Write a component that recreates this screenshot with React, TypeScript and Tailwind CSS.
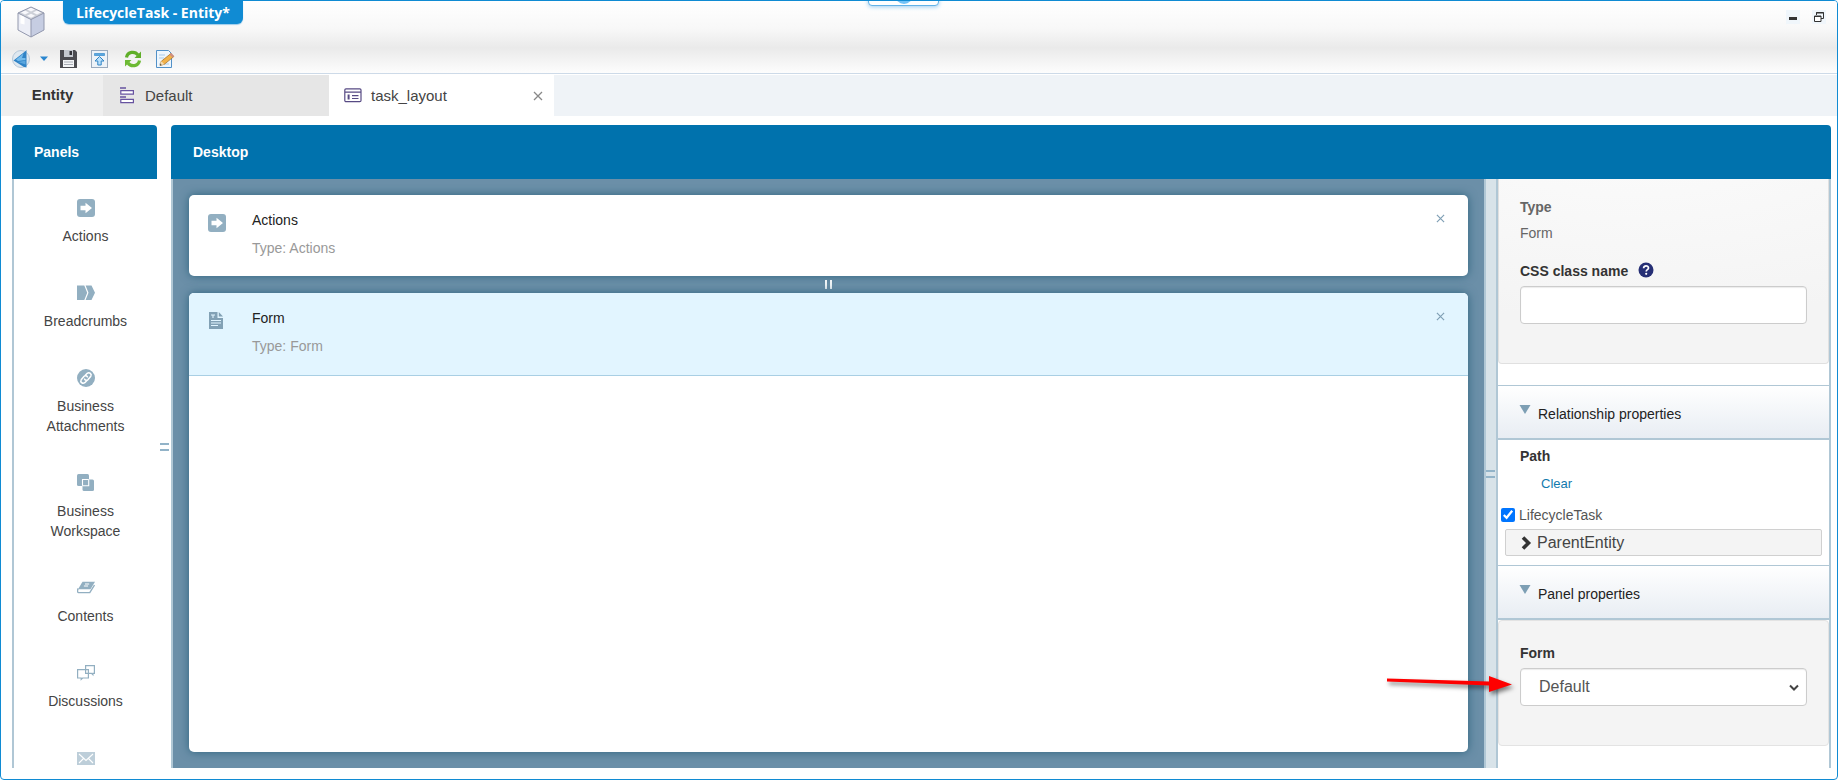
import React from "react";
import type { ReactNode } from "react";

const ActionsIcon = () => (
  <svg width="18" height="18" viewBox="0 0 18 18">
    <rect width="18" height="18" rx="3" fill="#92afc1" />
    <path d="M3.5 6.800h5V3.800L15 9l-6.500 5.200v-3h-5z" fill="#fff" />
  </svg>
);

const BreadcrumbsIcon = () => (
  <svg width="18" height="18" viewBox="0 0 18 18">
    <path d="M0 1.500h7.300l2.900 7.200-2.900 7.300H0z M8.600 1.500h5.900L18 8.700 14.500 16H8.600l2.900-7.300z" fill="#92afc1" />
  </svg>
);

const AttachmentIcon = () => (
  <svg width="18" height="18" viewBox="0 0 18 18">
    <circle cx="9" cy="9" r="9" fill="#92afc1" />
    <g fill="none" stroke="#fff" strokeWidth="1.500" strokeLinecap="round">
      <path d="M8.300 6.200l1.900-1.900c2.300-1.700 4.900.8 3.600 2.900l-2.900 3.500c-1.200 1.100-2.700.7-3.300-.6" />
      <path d="M9.700 11.800l-1.900 1.900c-2.300 1.700-4.900-.8-3.600-2.900l2.900-3.500c1.200-1.100 2.700-.7 3.300.6" />
    </g>
  </svg>
);

const WorkspaceIcon = () => (
  <svg width="18" height="18" viewBox="0 0 18 18">
    <rect x="0" y="0" width="12" height="12" rx="1.500" fill="#92afc1" />
    <rect x="5.500" y="5.500" width="11.500" height="11.500" rx="1.500" fill="#92afc1" />
    <path d="M5.500 11.700V5.500h6.200M5.500 11.700h6.200V5.500" fill="none" stroke="#fff" strokeWidth="1.100" />
  </svg>
);

const ContentsIcon = () => (
  <svg width="18" height="18" viewBox="0 0 18 18">
    <path d="M5.500 2.800H18l-4.500 7.400H1z" fill="#92afc1" />
    <path d="M8 5h4.200M6.900 7h4.200" stroke="#fff" strokeWidth="1" />
    <path d="M1.200 9.500C.2 11 .4 13.600 1.500 13.600h11.300L17.500 6" fill="none" stroke="#92afc1" strokeWidth="1.400" />
  </svg>
);

const DiscussionsIcon = () => (
  <svg width="18" height="18" viewBox="0 0 18 18" fill="none" stroke="#92afc1" strokeWidth="1.200">
    <path d="M8.600 1.600h8.800v7.800h-1.500v1.400l-1.400-1.400H8.600z" />
    <path d="M.6 5.600h10.800v8.400H5.600l-1.400 1.400V14H.6z" />
  </svg>
);

const MailIcon = () => (
  <svg width="18" height="18" viewBox="0 0 18 18">
    <rect y="3" width="18" height="13" fill="#92afc1" />
    <path d="M2 5l7 6.500L16 5M2 14l4.500-4.500M16 14l-4.500-4.500" fill="none" stroke="#fff" strokeWidth="1.100" />
  </svg>
);

const FormIcon = () => (
  <svg width="18" height="18" viewBox="0 0 18 18">
    <path d="M1 0h8.500v6H15v11H1z M10.800 0L15 4.600h-4.200z" fill="#82a1b5" />
    <path d="M3 3h4M5 3v3M3 8.500h10M3 11h10M3 13.500h7" stroke="#e2f5ff" strokeWidth="1.100" />
  </svg>
);

const CubeIcon = () => (
  <svg width="28" height="32" viewBox="0 0 28 32">
    <path d="M14 1l13 6v17l-13 7L1 24V7z" fill="#dfe3f0" />
    <path d="M1 7l13 6.500V31L1 24z" fill="#eceef6" />
    <path d="M27 7l-13 6.500V31l13-7z" fill="#c6cde2" />
    <path d="M14 1l13 6-13 6.500L1 7z" fill="#cdd0d8" />
    <path d="M14 1.500l4 2-4 2-4-2zM8 4.500l4 2-4 2-4-2zM20 4.500l4 2-4 2-4-2zM14 7.800l4 2-4 2-4-2z" fill="#f8f8fc" />
    <path d="M3.500 8.500v9l4 1v-8.200z" fill="#fff" />
    <path d="M1 7l13 6.500L27 7M14 13.500V31M14 1l13 6v17l-13 7L1 24V7z" fill="none" stroke="#9298ad" strokeLinejoin="round" />
  </svg>
);

const BackIcon = () => (
  <svg width="18" height="20" viewBox="0 0 18 20">
    <circle cx="9" cy="10" r="8.500" fill="#dfe8f0" stroke="#b5c7d8" />
    <path d="M1.500 11.500L13 2.500 14.500 1v17.500L12 18z" fill="#2f83c6" />
    <path d="M4 10.500L11.500 4.500 10 9h3.500v2L6 12z" fill="#74bbec" />
    <path d="M6 13l7.500-1.500v4z" fill="#5aa6de" />
  </svg>
);

const SaveIcon = () => (
  <svg width="17" height="18" viewBox="0 0 17 18">
    <path d="M0 0h15l2 2v16H0z" fill="#4b4b50" />
    <path d="M4 0h9v7H4z" fill="#c4c8cf" />
    <path d="M9.500 1H12v4H9.500z" fill="#33343a" />
    <path d="M3 10h11v7H3z" fill="#f3f4f6" />
    <path d="M4 12h9M4 14.500h9" stroke="#a7abb3" />
  </svg>
);

const PublishIcon = () => (
  <svg width="17" height="18" viewBox="0 0 17 18">
    <rect x=".5" y=".5" width="16" height="17" fill="#edf2f7" stroke="#9aaabd" />
    <path d="M3.500 3.500h10v2h-10z" fill="#5aa7e0" stroke="#3b8ccb" strokeWidth=".7" />
    <path d="M8.500 6.500l4.500 4.500h-2.800v4H6.800v-4H4z" fill="#b9e0fb" stroke="#3285c5" />
  </svg>
);

const RefreshIcon = () => (
  <svg width="18" height="18" viewBox="0 0 18 18">
    <path d="M2.500 7.500C3.500 1.500 11 .8 14 5" fill="none" stroke="#5fae28" strokeWidth="3.200" />
    <path d="M17 1.500v6.500h-6.500z" fill="#5fae28" />
    <path d="M15.500 10.500C14.500 16.500 7 17.200 4 13" fill="none" stroke="#6dba34" strokeWidth="3.200" />
    <path d="M1 16.500V10h6.500z" fill="#6dba34" />
  </svg>
);

const EditIcon = () => (
  <svg width="19" height="18" viewBox="0 0 19 18">
    <path d="M.5.500h12l3 3v14H.500z" fill="#eef6fd" stroke="#5291c8" />
    <path d="M3 5h6M3 8h5M3 14h10" stroke="#a9cbea" />
    <path d="M4 15.500l1.300-4.200 9.500-7.700 3 3-9.500 7.700z" fill="#f2b249" stroke="#a9762f" strokeWidth=".8" />
    <path d="M13.500 4.400l3 3 1.600-1.500-3-3z" fill="#cf8d80" />
    <path d="M4 15.500l1.300-4.200 3 3z" fill="#f3dcb5" />
    <path d="M4 15.500l.5-1.700 1.200 1.200z" fill="#333" />
  </svg>
);

const LayoutRowsIcon = () => (
  <svg width="16" height="17" viewBox="0 0 16 17" fill="none" stroke="#6753a0">
    <path d="M1 1h6M1 10h6" strokeWidth="1.500" />
    <path d="M1.800 3.600h12.600v3.600H1.800zM1.800 12.300h12.600v3.400H1.800z" fill="#fff" strokeWidth="1.200" />
  </svg>
);

const LayoutIcon = () => (
  <svg width="18" height="16" viewBox="0 0 18 16" fill="none" stroke="#574a84" strokeWidth="1.200">
    <rect x=".8" y="1.800" width="16.200" height="12.800" rx="1.200" />
    <path d="M1 5.200h16M8 8.600h6.500M8 11.500h6.500" />
    <path d="M4.600 7.500v5" strokeWidth="2" />
  </svg>
);

const CloseIcon = ({ size }: { size: number }) => (
  <svg width={size} height={size} viewBox="0 0 10 10" stroke="currentColor" strokeWidth="1.300">
    <path d="M1 1l8 8M9 1L1 9" />
  </svg>
);

const palette: { name: string; icon: ReactNode }[] = [
  { name: "Actions", icon: <ActionsIcon /> },
  { name: "Breadcrumbs", icon: <BreadcrumbsIcon /> },
  { name: "Business Attachments", icon: <AttachmentIcon /> },
  { name: "Business Workspace", icon: <WorkspaceIcon /> },
  { name: "Contents", icon: <ContentsIcon /> },
  { name: "Discussions", icon: <DiscussionsIcon /> },
];

function TitleBar() {
  return (
    <header className="relative flex h-[73px] shrink-0 flex-col justify-between border-b border-[#cddae8] bg-[linear-gradient(#ffffff_0%,#f8f8f8_38%,#eaeaea_65%,#fdfdfd_100%)]">
      <div className="flex items-start justify-between">
        <div className="flex items-start gap-[18px] pl-4">
          <div className="pt-[5px]"><CubeIcon /></div>
          <h1 className="flex h-[23px] w-[180px] items-center justify-center rounded-b-[6px] bg-[#108bd3] font-['Open_Sans',sans-serif] text-sm font-bold text-white shadow-[0_1px_1px_#9ccbeb]">
            LifecycleTask - Entity*
          </h1>
        </div>
        <div className="flex gap-3 pr-[11px] pt-[9px]">
          <button aria-label="Minimize" className="flex size-[14px] items-center justify-center bg-[#f0f6fb]">
            <svg width="10" height="10" viewBox="0 0 10 10"><path d="M1 5h8v3H1z" fill="#333" /></svg>
          </button>
          <button aria-label="Restore" className="flex size-[14px] items-center justify-center bg-[#f0f6fb]">
            <svg width="12" height="12" viewBox="0 0 12 12" fill="none" stroke="#333">
              <path d="M3.500 4V1.500h7v6H8M3 2h8" />
              <path d="M1.500 5h6.500v5.500H1.500zM1 5.500h7" fill="#fff" />
            </svg>
          </button>
        </div>
      </div>
      <nav className="mb-[5px] flex h-[18px] items-center pl-[11px]" aria-label="Toolbar">
        <button aria-label="Back"><BackIcon /></button>
        <button aria-label="Back history" className="ml-2.5">
          <svg width="8" height="6" viewBox="0 0 8 6"><path d="M0 .5h8L4 5z" fill="#2a86cf" /></svg>
        </button>
        <button aria-label="Save" className="ml-3"><SaveIcon /></button>
        <button aria-label="Publish" className="ml-3.5"><PublishIcon /></button>
        <button aria-label="Refresh" className="ml-4"><RefreshIcon /></button>
        <button aria-label="Edit" className="ml-3.5"><EditIcon /></button>
      </nav>
      <div className="absolute left-1/2 -top-1 flex h-[9px] w-[71px] -translate-x-[51px] items-end justify-center overflow-hidden rounded-b-[4px] border border-[#63b3e8] bg-white shadow-[0_1px_4px_#9bcdf0]">
        <svg width="20" height="6" viewBox="0 0 20 6"><circle cx="10" cy="-4" r="9" fill="#72c2f7" /></svg>
      </div>
    </header>
  );
}

function TabBar() {
  return (
    <nav className="mt-px flex h-[41px] shrink-0 bg-[#eff3f7] pl-px text-[15px] text-[#444]" aria-label="Editors">
      <button className="w-[101px] bg-[#efefef] pb-0.5 text-[15px] font-bold text-[#333]">Entity</button>
      <button className="flex w-[226px] items-center gap-2.5 bg-[#e6e6e6] pl-4">
        <LayoutRowsIcon />Default
      </button>
      <div className="flex w-[225px] items-center justify-between bg-white pl-[15px] pr-[11px]">
        <button className="flex items-center gap-[9px]"><LayoutIcon />task_layout</button>
        <button aria-label="Close task_layout" className="text-[#888]"><CloseIcon size={10} /></button>
      </div>
    </nav>
  );
}

function PanelHeading({ name, icon }: { name: string; icon: ReactNode }) {
  return (
    <div className="flex items-start pb-[18px]">
      <div className="w-[63px] shrink-0 pl-[19px] pt-[19px]">{icon}</div>
      <div className="flex-1 pt-[15px]">
        <h3 className="leading-5 text-[#222]">{name}</h3>
        <p className="mt-2 leading-5 text-[#999]">Type: {name}</p>
      </div>
      <button aria-label={`Remove ${name}`} className="px-[23px] pt-[19px] text-[#7f9fb5]"><CloseIcon size={9} /></button>
    </div>
  );
}

function SectionHeader({ title }: { title: string }) {
  return (
    <button className="flex h-[55px] w-full shrink-0 items-start gap-[7px] border-b-2 border-t border-[#b0c7d5] bg-linear-to-b from-white to-[#e8edf3] pl-[21px] pt-[18px] text-[#222]">
      <svg width="12" height="16" viewBox="0 0 12 16"><path d="M.5 1h11L6 10z" fill="#7d9fb4" /></svg>
      {title}
    </button>
  );
}

function Properties() {
  return (
    <aside className="flex w-[335px] shrink-0 flex-col border-x-2 border-[#b0c7d5] bg-white">
      <section className="flex h-[185px] shrink-0 flex-col rounded-b-[4px] border border-t-0 border-[#e0e0e0] bg-[radial-gradient(ellipse_500px_200px_at_40%_-60px,#fcfcfc_0%,#f4f4f4_100%)] px-[21px] pt-[18px]">
        <h3 className="font-bold leading-5 text-[#666]">Type</h3>
        <p className="mt-1.5 leading-5 text-[#666]">Form</p>
        <div className="mt-[18px] flex items-center gap-2.5 leading-5">
          <label htmlFor="css-class" className="font-bold text-[#333]">CSS class name</label>
          <svg width="16" height="18" viewBox="0 0 16 18">
            <circle cx="8" cy="8" r="7.500" fill="#262f75" />
            <path d="M5.600 6.200c0-3.200 4.900-3 4.900-.2 0 1.700-2.300 1.700-2.300 3.500" fill="none" stroke="#fff" strokeWidth="1.700" />
            <circle cx="8.200" cy="11.800" r="1.100" fill="#fff" />
          </svg>
        </div>
        <input id="css-class" type="text" className="mt-[5px] h-[38px] w-full shrink-0 rounded-[4px] border border-[#ccc] bg-white px-4 text-base shadow-[inset_0_1px_1px_rgba(0,0,0,0.08)]" />
      </section>
      <div className="mt-[21px]"><SectionHeader title="Relationship properties" /></div>
      <section className="flex h-[125px] shrink-0 flex-col">
        <h3 className="mt-1.5 pl-[22px] font-bold leading-5 text-[#333]">Path</h3>
        <a href="#clear" className="mt-2 self-start pl-[43px] text-[13px] leading-5 text-[#127aad]">Clear</a>
        <div className="mt-[11px] flex items-center gap-1 pl-[3px] leading-5">
          <input id="lifecycle-task" type="checkbox" defaultChecked className="size-[14px] accent-[#0075ff]" />
          <label htmlFor="lifecycle-task" className="text-[#555]">LifecycleTask</label>
        </div>
        <button className="mx-[7px] mt-1 flex h-[27px] shrink-0 items-center gap-[5px] rounded-[2px] border border-[#d0d0d0] bg-[#f4f4f4] pl-[15px] text-base text-[#444]">
          <svg width="11" height="14" viewBox="0 0 11 14"><path d="M2 1.500L7.500 7 2 12.500" fill="none" stroke="#333" strokeWidth="3.600" /></svg>
          ParentEntity
        </button>
      </section>
      <SectionHeader title="Panel properties" />
      <section className="flex h-[126px] shrink-0 flex-col rounded-[4px] border border-[#e3e3e3] bg-[#f4f4f4] px-[21px] pt-[22px]">
        <label htmlFor="form-choice" className="font-bold leading-5 text-[#333]">Form</label>
        <div className="relative mt-[5px]">
          <select id="form-choice" className="h-[38px] w-full appearance-none rounded-[4px] border border-[#ccc] bg-white pl-[18px] text-base text-[#555] shadow-[inset_0_1px_1px_rgba(0,0,0,0.08)]">
            <option>Default</option>
          </select>
          <svg className="pointer-events-none absolute right-2 top-4" width="10" height="8" viewBox="0 0 10 8"><path d="M1 1.500l4 4 4-4" fill="none" stroke="#444" strokeWidth="2" /></svg>
          <svg className="pointer-events-none absolute -left-[134px] top-0 overflow-visible" width="132" height="30" viewBox="0 0 132 30">
            <g className="drop-shadow-[2px_3px_2px_rgba(0,0,0,0.5)]" fill="#fe0000">
              <path d="M1 10.500l102 3V8l23 8.500-23 7.500v-6.500L1 13.500z" />
            </g>
          </svg>
        </div>
      </section>
    </aside>
  );
}

export default function App() {
  return (
    <div className="flex h-screen min-h-[480px] flex-col overflow-hidden rounded-[4px] border border-[#108bd3] bg-white font-['Liberation_Sans',Arial,sans-serif] text-sm text-[#444]">
      <TitleBar />
      <TabBar />
      <main className="flex min-h-0 flex-1 pb-[11px] pl-[11px] pr-1.5 pt-[9px]">
        <section className="flex w-[145px] shrink-0 flex-col">
          <h2 className="flex h-[54px] shrink-0 items-center rounded-t-[4px] bg-[#0072ad] pl-[22px] font-bold text-white">Panels</h2>
          <ul className="min-h-0 flex-1 overflow-hidden border-l-2 border-[#b0c7d5]">
            {palette.map((item) => (
              <li key={item.name} className="flex flex-col items-center gap-[9px] px-4 pb-[18px] pt-5 text-center leading-5">
                {item.icon}
                <span>{item.name}</span>
              </li>
            ))}
            <li className="flex justify-center pt-5 opacity-60"><MailIcon /></li>
          </ul>
        </section>
        <div className="flex w-3.5 shrink-0 items-center justify-center">
          <div className="h-2 w-[9px] border-y-2 border-[#92b3c8]" />
        </div>
        <section className="flex min-w-0 flex-1 flex-col">
          <h2 className="flex h-[54px] shrink-0 items-center rounded-t-[4px] bg-[#0072ad] pl-[22px] font-bold text-white">Desktop</h2>
          <div className="flex min-h-0 flex-1">
            <div className="flex min-w-0 flex-1 flex-col border-x-2 border-[#b0c7d5] bg-[#6b8fa8] p-4">
              <article className="shrink-0 rounded-[5px] bg-white shadow-[0_0_10px_#2f647e]">
                <PanelHeading name="Actions" icon={<ActionsIcon />} />
              </article>
              <div className="flex h-[17px] shrink-0 items-center justify-center">
                <div className="h-[9px] w-[7px] border-x-2 border-[#f0f4f6]" />
              </div>
              <article className="min-h-0 flex-1 overflow-hidden rounded-[5px] bg-white shadow-[0_0_10px_#2f647e]">
                <div className="border-b border-[#a9cfe4] bg-[#e2f5ff] pb-px">
                  <PanelHeading name="Form" icon={<FormIcon />} />
                </div>
              </article>
            </div>
            <div className="flex w-2.5 shrink-0 items-center bg-[#d8e3e9]">
              <div className="h-2 w-[9px] border-y-2 border-[#92b3c8]" />
            </div>
            <Properties />
          </div>
        </section>
      </main>
    </div>
  );
}
